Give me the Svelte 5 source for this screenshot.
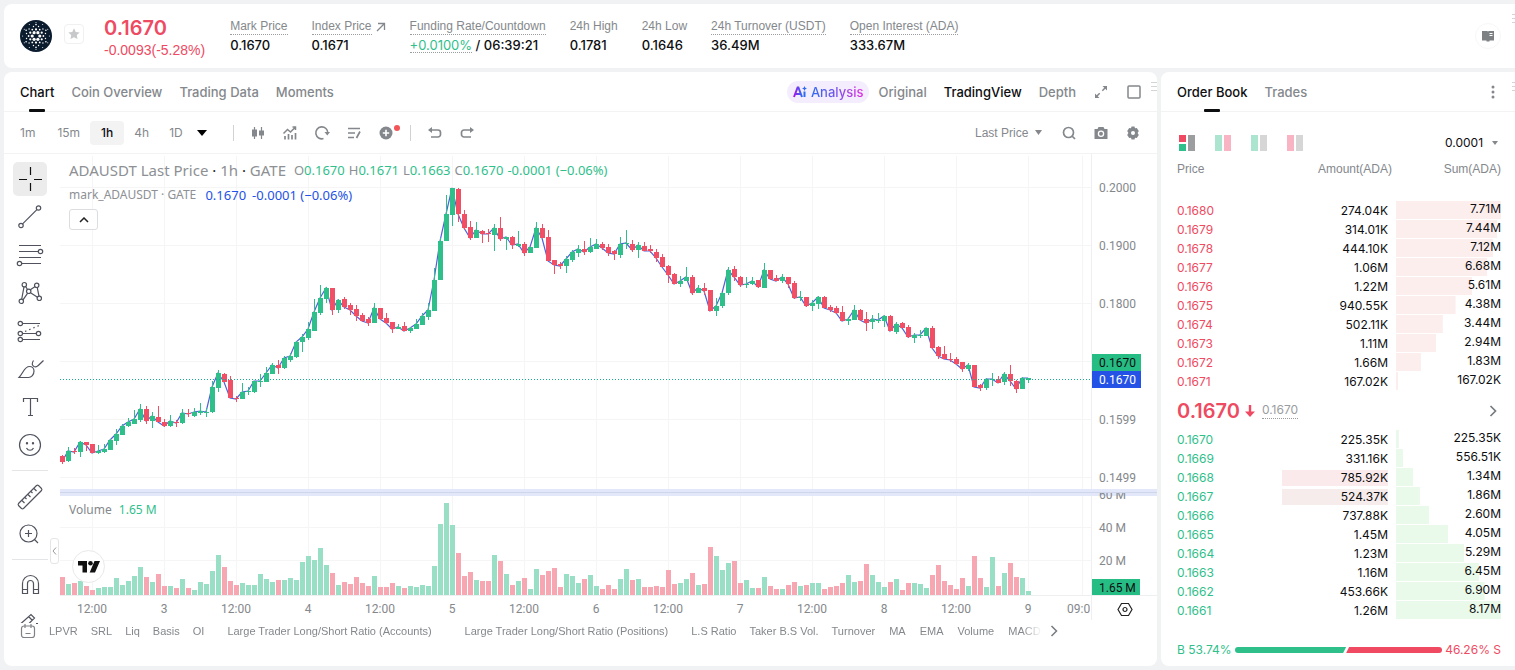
<script>
  const UP = '#2fbf8b';
  const DOWN = '#f04f66';

  // direction, high, body top, body bottom, low, volume height
  const raw = `D455,456,462,464,18 U447,451,461,462,11 D448,451,452,454,12 U441,442,452,457,14 D442,442,445,451,9 D444,444,453,453,5 U445,451,453,454,7 U444,449,452,453,8 U439,440,450,450,8 U429,434,441,445,17 U424,426,435,435,10 U418,422,426,427,14 U410,419,424,424,19 U404,409,420,422,28 D406,409,421,424,18 U412,416,421,428,13 D406,417,422,422,21 D419,422,426,427,9 U415,421,426,427,9 D420,422,423,427,7 U409,413,423,424,16 D409,413,414,417,7 U408,412,416,417,5 U403,411,413,415,13 U408,412,413,417,11 U381,387,412,413,24 U370,373,388,392,40 D373,374,382,382,28 D376,380,398,398,14 D396,398,399,402,10
U383,392,399,399,12 U387,391,392,395,10 U381,381,392,393,10 U374,381,382,387,21 U367,373,382,382,16 U363,365,374,374,13 D360,365,368,374,15 U356,358,368,369,15 U353,356,360,362,17 U341,342,357,358,15 U334,337,342,352,33 U322,329,338,340,39 U299,312,331,331,35 U285,298,313,315,47 U287,288,299,303,30 D288,288,310,315,22 U299,300,310,313,10 D297,299,307,309,13 D303,305,310,315,11 D305,309,316,321,18 D313,315,321,322,12 D317,319,323,326,9 U303,308,323,323,19 D308,308,319,320,8 D313,318,323,324,8 D322,322,329,333,12 U324,327,329,329,9 D322,326,331,331,7 U327,328,331,333,9 U319,324,329,329,8
U313,316,325,325,10 U303,310,317,320,9 U268,280,311,311,29 U238,241,280,280,71 U195,214,241,241,92 U188,188,215,226,70 D188,189,214,222,42 D210,214,228,230,19 D221,227,238,240,23 U222,230,238,238,15 D230,231,234,243,14 D229,233,234,242,14 U224,228,235,251,40 D217,228,239,241,34 U237,237,239,250,21 D236,237,245,249,10 U231,244,246,247,14 D242,244,253,256,17 U247,247,253,253,6 U222,228,248,248,26 D224,228,238,238,20 D230,237,261,261,24 D260,260,265,274,27 D262,264,266,269,8 U256,259,266,273,21 U250,252,260,262,19 U245,249,253,257,12 D241,249,252,255,16 U238,247,252,253,20 U239,244,249,249,9
D242,244,248,250,6 D244,247,253,256,10 D250,251,254,260,6 U237,244,255,258,16 U230,243,244,249,26 D240,244,250,252,15 U242,245,250,258,16 D242,246,251,251,8 D245,249,251,253,8 D249,252,258,262,9 D254,257,267,267,8 D265,266,275,283,25 D273,274,284,284,11 U276,281,284,287,12 U267,277,281,281,16 D275,277,293,295,22 U285,288,293,293,10 D283,288,291,295,11 D290,290,311,311,48 U298,306,311,316,39 U292,293,306,308,25 U267,270,293,295,32 D266,269,277,281,34 D276,277,285,287,12 U277,284,285,288,15 U277,281,284,285,7 D280,280,287,288,7 U263,270,288,288,18 D270,270,279,280,9 D275,278,281,281,6 U274,277,281,283,6
D277,277,284,288,10 D281,283,298,299,13 U291,297,298,301,9 D297,297,306,307,10 U300,303,306,311,12 U296,297,304,309,12 D296,297,308,308,6 D305,307,310,312,8 D306,308,313,314,9 D306,312,321,321,12 U317,319,321,325,20 U305,310,320,320,13 D309,310,320,321,14 D312,319,323,331,31 U315,319,322,329,20 U313,320,321,323,13 U315,316,321,327,8 D315,316,331,331,13 U322,324,332,334,16 D322,323,328,328,5 D325,327,337,338,12 U333,335,338,343,12 U330,335,336,338,11 U328,328,336,336,7 D326,328,348,349,20 D346,347,356,359,30 D346,354,359,359,14 D353,359,360,362,10 D357,359,364,365,6 D362,362,369,372,17 U363,365,369,371,9
D365,365,387,387,39 D384,385,388,391,17 U378,379,388,390,8 U373,379,380,386,38 D376,379,383,383,9 U372,374,382,385,22 D365,374,381,386,32 D380,381,389,393,18 U377,378,389,389,17 U378,378,380,383,4`;

  const TOP = 154;
  const PLOT = 1031;
  const AXIS = 66;
  const candles = raw.split(/\s+/).map((s, i) => {
    const [high, top, bottom, low, volume] = s.slice(1).split(',').map(Number);
    const up = s[0] === 'U';
    return { x: i * 6, up, high: high - TOP, top: top - TOP, h: Math.max(1, bottom - top), low: low - TOP, close: (up ? top : bottom) - TOP, volume };
  });
  const markLine = candles.map((c) => `${c.x + 2},${c.close}`).join(' ');

  let width = $state(PLOT + AXIS);
  // newest candle stays at the right edge
  const shift = $derived(width - PLOT - AXIS);

  const times = ['12:00', '3', '12:00', '4', '12:00', '5', '12:00', '6', '12:00', '7', '12:00', '8', '12:00', '9'];
  const priceTicks = [[34, '0.2000'], [92, '0.1900'], [150, '0.1800'], [266, '0.1599'], [324, '0.1499']];
  const gridRows = [34, 92, 150, 208, 266, 324, 374, 407];

  const stats = [
    ['24h High', '0.1781', false],
    ['24h Low', '0.1646', false],
    ['24h Turnover (USDT)', '36.49M', true],
    ['Open Interest (ADA)', '333.67M', true]
  ];
  const indicators = ['LPVR', 'SRL', 'Liq', 'Basis', 'OI', 'Large Trader Long/Short Ratio (Accounts)', 'Large Trader Long/Short Ratio (Positions)', 'L.S Ratio', 'Taker B.S Vol.', 'Turnover', 'MA', 'EMA', 'Volume', 'MACD'];

  const asks = [
    ['0.1680', '274.04K', '7.71M', 7.71], ['0.1679', '314.01K', '7.44M', 7.44], ['0.1678', '444.10K', '7.12M', 7.12],
    ['0.1677', '1.06M', '6.68M', 6.68], ['0.1676', '1.22M', '5.61M', 5.61], ['0.1675', '940.55K', '4.38M', 4.38],
    ['0.1674', '502.11K', '3.44M', 3.44], ['0.1673', '1.11M', '2.94M', 2.94], ['0.1672', '1.66M', '1.83M', 1.83],
    ['0.1671', '167.02K', '167.02K', 0.167]
  ];
  const bids = [
    ['0.1670', '225.35K', '225.35K', 0.225], ['0.1669', '331.16K', '556.51K', 0.557], ['0.1668', '785.92K', '1.34M', 1.34, 'flash'],
    ['0.1667', '524.37K', '1.86M', 1.86, 'flash late'], ['0.1666', '737.88K', '2.60M', 2.6], ['0.1665', '1.45M', '4.05M', 4.05],
    ['0.1664', '1.23M', '5.29M', 5.29], ['0.1663', '1.16M', '6.45M', 6.45], ['0.1662', '453.66K', '6.90M', 6.9],
    ['0.1661', '1.26M', '8.17M', 8.17]
  ];

  const ring = (n, r, size, turn = 0) =>
    Array.from({ length: n }, (_, i) => {
      const a = ((i + turn) / n) * Math.PI * 2;
      return { x: 16 + r * Math.cos(a), y: 16 + r * Math.sin(a), size };
    });
  const logoDots = [...ring(6, 3.8, 1.6), ...ring(6, 6.6, 1.1, 0.5), ...ring(6, 7.4, 0.9), ...ring(12, 9.8, 0.7, 0.5), ...ring(6, 11.4, 0.8, 0.5), ...ring(6, 13.4, 0.5), ...ring(6, 13.6, 0.5, 0.5)];
</script>

<main>
  <header class="card summary">
    <svg class="coin" viewBox="0 0 32 32" aria-hidden="true">
      <circle cx="16" cy="16" r="16" fill="#0b1b2e" />
      {#each logoDots as d}<circle cx={d.x} cy={d.y} r={d.size} fill="#fff" />{/each}
    </svg>
    <button class="star" aria-label="Add to favourites">
      <svg width="12" height="12" viewBox="0 0 12 12"><path d="M6 .3l1.7 3.6 4 .5-2.9 2.7.7 4L6 9.2l-3.5 1.9.7-4L.3 4.4l4-.5z" fill="#c6c8ca" /></svg>
    </button>
    <div class="last">
      <strong>0.1670</strong>
      <span>-0.0093(-5.28%)</span>
    </div>
    <dl>
      <div><dt><span class="dotted">Mark Price</span></dt><dd>0.1670</dd></div>
      <div>
        <dt><a href="#index"><span class="dotted">Index Price</span><svg width="10" height="10" viewBox="0 0 10 10"><path d="M1 9L8.500 1.500M2 1.500h6.500V8" fill="none" stroke="#84888c" stroke-width="1.300" /></svg></a></dt>
        <dd>0.1671</dd>
      </div>
      <div><dt><span class="dotted">Funding Rate/Countdown</span></dt><dd><span class="rate">+0.0100%</span> / 06:39:21</dd></div>
      {#each stats as [label, value, tip]}
        <div><dt><span class:dotted={tip}>{label}</span></dt><dd>{value}</dd></div>
      {/each}
    </dl>
    <button class="guide" aria-label="Guide">
      <svg width="14" height="14" viewBox="0 0 14 14"><path d="M1 2h5.500v9.500H1zM7.500 2H13v9.500H7.500zM5.500 11h3v1.500h-3zM6 2.500h2v9H6z" fill="#7e8184" /><path d="M8.500 4.500h3M8.500 6.500h3" stroke="#fff" /></svg>
    </button>
    <span class="grip" aria-hidden="true"></span>
  </header>

  <section class="card chart">
    <nav class="tabs">
      <button class="active">Chart</button>
      <button>Coin Overview</button>
      <button>Trading Data</button>
      <button>Moments</button>
      <span class="spacer"></span>
      <button class="ai">
        <svg width="14" height="12" viewBox="0 0 14 12"><defs><linearGradient id="ai"><stop stop-color="#a615e8" /><stop offset="1" stop-color="#2d6bf0" /></linearGradient></defs><path d="M1 11L4.600 1.500h.8L9 11M2.500 8h5" fill="none" stroke="url(#ai)" stroke-width="2" /><path d="M11.500 5.500V11" stroke="#2d6bf0" stroke-width="2" /><path d="M11.500 0l.8 1.700 1.700.8-1.700.8-.8 1.700-.8-1.700L9 2.500l1.700-.8z" fill="#2d6bf0" /></svg><span>Analysis</span>
      </button>
      <button>Original</button>
      <button class="chosen">TradingView</button>
      <button>Depth</button>
      <button class="icon" aria-label="Expand"><svg viewBox="0 0 16 16"><path d="M9.300 6.700L13 3M6.700 9.300L3 13" fill="none" stroke="currentColor" stroke-width="1.500" /><path d="M9.500 2H14v4.500zM2 9.500V14h4.500z" fill="currentColor" /></svg></button>
      <button class="icon" aria-label="Full screen"><svg viewBox="0 0 16 16"><rect x="2" y="2" width="12" height="12" rx="1" fill="none" stroke="currentColor" stroke-width="1.500" /></svg></button>
      <span class="grip" aria-hidden="true"></span>
    </nav>

    <div class="toolbar">
      <button>1m</button>
      <button>15m</button>
      <button class="on">1h</button>
      <button>4h</button>
      <button>1D</button>
      <button class="more" aria-label="More intervals"><svg width="10" height="6" viewBox="0 0 10 6"><path d="M0 0h10L5 6z" fill="#000" /></svg></button>
      <i class="bar"></i>
      <button class="icon" aria-label="Chart type"><svg viewBox="0 0 16 16"><path d="M4.500 2v12M11.500 2v12" stroke="currentColor" stroke-width="1.200" /><path d="M2 4.500h5v7H2zM9 5.500h5v5H9z" fill="currentColor" /></svg></button>
      <button class="icon" aria-label="Indicators"><svg viewBox="0 0 16 16"><path d="M1.500 8.500l4-4 3 2.500 5-5M10.500 2h3v3" fill="none" stroke="currentColor" stroke-width="1.500" /><path d="M3 11v3.500M6.500 9v5.500M10 10v4.500M13.500 8v6.500" stroke="currentColor" stroke-width="1.700" /></svg></button>
      <button class="icon" aria-label="Replay"><svg viewBox="0 0 16 16"><path d="M9.500 13.600A6 6 0 1 1 13.800 8" fill="none" stroke="currentColor" stroke-width="1.600" /><path d="M10.500 7h5.500l-2.700 3.500z" fill="currentColor" /></svg></button>
      <button class="icon" aria-label="Templates"><svg viewBox="0 0 16 16"><path d="M2 3.500h12M2 8h7M2 12.500h6M14 6.500l-3.500 6.500" fill="none" stroke="currentColor" stroke-width="1.700" /></svg></button>
      <button class="icon alert" aria-label="Add alert"><svg viewBox="0 0 16 16"><circle cx="8" cy="8" r="6.500" fill="currentColor" /><path d="M8 4.800v6.400M4.800 8h6.400" stroke="#fff" stroke-width="1.600" /></svg></button>
      <i class="bar tight"></i>
      <button class="icon" aria-label="Undo"><svg viewBox="0 0 16 16"><path d="M3 5h8a2.500 2.500 0 0 1 2.500 2.500v2A2.500 2.500 0 0 1 11 12H4" fill="none" stroke="currentColor" stroke-width="1.700" /><path d="M5 2v6L1 5z" fill="currentColor" /></svg></button>
      <button class="icon" aria-label="Redo"><svg viewBox="0 0 16 16"><path d="M13 5H5a2.500 2.500 0 0 0-2.500 2.500v2A2.500 2.500 0 0 0 5 12h7" fill="none" stroke="currentColor" stroke-width="1.700" /><path d="M11 2v6l4-3z" fill="currentColor" /></svg></button>
      <span class="spacer"></span>
      <label class="pick"><select aria-label="Price source"><option>Last Price</option></select><svg width="7" height="5" viewBox="0 0 7 5"><path d="M0 0h7L3.500 5z" fill="#84888c" /></svg></label>
      <button class="icon" aria-label="Search"><svg viewBox="0 0 16 16"><circle cx="7.500" cy="7.500" r="5" fill="none" stroke="currentColor" stroke-width="1.700" /><path d="M11 11l3 3" stroke="currentColor" stroke-width="1.700" /></svg></button>
      <button class="icon" aria-label="Screenshot"><svg viewBox="0 0 16 16"><path d="M1.500 4h3l1-2h5l1 2h3v10h-13z" fill="currentColor" /><circle cx="8" cy="8.700" r="2.600" fill="none" stroke="#fff" stroke-width="1.300" /></svg></button>
      <button class="icon" aria-label="Settings"><svg viewBox="0 0 16 16"><path d="M6.500 1.500h3l.5 1.800 1.800-.4 2 3.100-1.200 2 1.200 2-2 3.100-1.800-.4-.5 1.800h-3L6 12.700l-1.800.4-2-3.100 1.200-2-1.200-2 2-3.100 1.800.4z" fill="currentColor" /><circle cx="8" cy="8" r="2" fill="#fff" /></svg></button>
    </div>

    <div class="body">
      <div class="tools">
        <button class="on" aria-label="Cross"><svg viewBox="0 0 34 34"><path d="M17.500 5v8M17.500 21v8M6 17.500h8M21 17.500h8" stroke="#111" /></svg></button>
        <button aria-label="Trend line"><svg viewBox="0 0 34 34"><circle cx="8" cy="25.500" r="2.200" /><circle cx="25.500" cy="8" r="2.200" /><path d="M9.600 23.900L23.900 9.600" /></svg></button>
        <button aria-label="Fib retracement"><svg viewBox="0 0 34 34"><path d="M6 7.500h22M6 13.500h19.500M6 19.500h22M8.500 25.500H28" /><circle cx="27.500" cy="13.500" r="2.200" /><circle cx="6.500" cy="25.500" r="2.200" /></svg></button>
        <button aria-label="Patterns"><svg viewBox="0 0 34 34"><path d="M8.700 23.200L11 10.800M12.500 10.300l2 3.200M17.300 13.800l4.900-3.200M24.200 11.300L26 20.200M10 23.800l4.500-6.500M17.500 16.800l7 4.500" /><circle cx="11.300" cy="8.700" r="2.200" /><circle cx="23.700" cy="9.300" r="2.200" /><circle cx="15.700" cy="15.300" r="2.200" /><circle cx="8.300" cy="25.300" r="2.200" /><circle cx="26.300" cy="22.300" r="2.200" /></svg></button>
        <button aria-label="Forecast"><svg viewBox="0 0 34 34"><circle cx="7.300" cy="9.500" r="2.200" /><circle cx="7.300" cy="19.500" r="2.200" /><circle cx="25.500" cy="19.500" r="2.200" /><circle cx="7.300" cy="25.500" r="2.200" /><path d="M9.500 9.500H27M9.500 19.500h13.800M9.500 25.500H27" /><path d="M12 17.500l14-6" stroke-dasharray="1.500 3" /></svg></button>
        <button aria-label="Brush"><svg viewBox="0 0 34 34"><path d="M6 25.500h9.500c3 0 5.500-3 5.500-6.500 0-2.700-2-4.500-4.500-4.500-5 0-6 6-10.500 11z" /><path d="M20.500 8.500c-2 3-1.500 5 .5 6 1.500.7 3 .3 4-.8l5.500-5.200" /></svg></button>
        <button aria-label="Text"><svg viewBox="0 0 34 34"><path d="M10.500 12V8.500h14V12M17.500 8.500v17M15 25.500h5" /></svg></button>
        <button aria-label="Icons"><svg viewBox="0 0 34 34"><circle cx="17" cy="17" r="10.500" /><path d="M13.500 20c1.500 3 5.500 3 7 0" /><circle cx="14" cy="15.300" r=".6" /><circle cx="20" cy="15.300" r=".6" /></svg></button>
        <hr />
        <button aria-label="Measure"><svg viewBox="0 0 34 34"><path d="M5.500 24.500l18-18q1-.7 2 0l3 3q.8 1 0 2l-18 18q-1 .7-2 0l-3-3q-.7-1 0-2zM9 21.500l2.500 2.500M12 18.500l1.500 1.500M15 15.500l2.500 2.500M18 12.500l1.500 1.500M21 9.500l2.500 2.500" /></svg></button>
        <button aria-label="Zoom in"><svg viewBox="0 0 34 34"><circle cx="15.500" cy="16.500" r="8.500" /><path d="M21.500 22.500l3.500 3.500M15.500 13v7M12 16.500h7" /></svg></button>
        <hr />
        <button aria-label="Magnet"><svg viewBox="0 0 34 34"><path d="M9.500 25.500v-10a7.500 7.500 0 0 1 16 0v10h-5v-10a3 3 0 0 0-6 0v10zM9.500 21.500h5M20.500 21.500h5" /></svg></button>
        <button aria-label="Keep drawing"><svg viewBox="0 0 34 34"><path d="M8 17.500l10-9 3.500 3.500-8 8M15.500 10.500l3.500 3.500M22 17.500h3" /></svg></button>
      </div>

      <div class="plot" bind:clientWidth={width}>
        <svg width={width} height="466" class="canvas" role="img" aria-label="ADAUSDT price and volume">
          <g stroke="#f5f5f6">
            {#each times as _, i}<path d="M{shift + 32.5 + i * 72} 2V441" />{/each}
            <path d="M{shift + 1022.5} 2V441" />
            {#each gridRows as y}<path d="M0 {y - 0.5}H{shift + PLOT}" />{/each}
          </g>
          <path d="M{shift + 1031.500} 0V466M0 441.500H{width}" stroke="#eeeff0" />
          <g transform="translate({shift} 0)">
            {#each candles as c}<rect x={c.x} y={441 - c.volume} width="5" height={c.volume} fill={c.up ? '#98dfc5' : '#f7a7b2'} />{/each}
            <polyline points={markLine} fill="none" stroke="#5061d8" stroke-width="1.200" />
            {#each candles as c}
              <g fill={c.up ? UP : DOWN}>
                <rect x={c.x + 2} y={c.high} width="1" height={c.low - c.high} />
                <rect x={c.x} y={c.top} width="5" height={c.h} />
              </g>
            {/each}
          </g>
          <path d="M0 225.500H{shift + PLOT}" stroke="#16ac92" stroke-dasharray="1 2" />
          <rect y="335" width={width} height="7" fill="#e2e8fa" />
          <path d="M0 338.500H{width}" stroke="#cfd6ec" />
          <g class="ticks" transform="translate({shift} 0)">
            {#each times as t, i}<text x={32 + i * 72} y="459" text-anchor="middle">{t}</text>{/each}
            <svg x="1000" y="440" width="30" height="24"><text x="7" y="19">09:00</text></svg>
            {#each priceTicks as [y, t]}<text x="1039" y={y + 4}>{t}</text>{/each}
            <svg x="1032" y="339" width="65" height="12"><text x="7" y="6">60 M</text></svg>
            <text x="1039" y="378">40 M</text>
            <text x="1039" y="411">20 M</text>
          </g>
          <g class="tags" transform="translate({shift + 1032} 0)">
            <rect y="200" width="49" height="17" fill="#26bd84" /><text x="7" y="213">0.1670</text>
            <rect y="217" width="49" height="17" fill="#2452e6" /><text x="7" y="230" fill="#fff">0.1670</text>
            <rect y="425" width="48" height="16" fill="#26bd84" /><text x="7" y="438">1.65 M</text>
          </g>
          <g transform="translate({shift + 1065} 455.500)" fill="none" stroke="#222" stroke-width="1.200"><path d="M-7 0l3.500-6h7L7 0 3.500 6h-7z" /><circle r="2" /></g>
        </svg>

        <div class="legend">
          <p class="title">ADAUSDT Last Price <b>·</b> 1h <b>·</b> GATE
            <span class="ohlc"><span>O<em>0.1670</em></span><span>H<em>0.1671</em></span><span>L<em>0.1663</em></span><span>C<em>0.1670</em></span><em>-0.0001 (−0.06%)</em></span>
          </p>
          <p class="mark">mark_ADAUSDT · GATE <span>0.1670</span><span>-0.0001 (−0.06%)</span></p>
          <button aria-label="Collapse legend"><svg width="10" height="6" viewBox="0 0 10 6"><path d="M1 5l4-4 4 4" fill="none" stroke="#222" stroke-width="1.500" /></svg></button>
        </div>
        <p class="volume">Volume <span>1.65 M</span></p>
        <a class="tv" href="#tradingview" aria-label="TradingView"><svg width="22" height="12" viewBox="0 0 22 12"><path d="M0 0h9v11.500H4.500V4.500H0zM16.500 0H22l-5 11.500h-5.300z" fill="#111" /><circle cx="12.500" cy="2.300" r="2.300" fill="#111" /></svg></a>
        <button class="fold" aria-label="Hide tools"><svg width="5" height="8" viewBox="0 0 5 8"><path d="M4 .5L1 4l3 3.500" fill="none" stroke="#999" /></svg></button>
      </div>
    </div>

    <footer>
      <button class="range" aria-label="Date range"><svg width="16" height="16" viewBox="0 0 16 16"><rect x="1.500" y="3" width="13" height="11.500" rx="2.500" fill="#fff" stroke="#7f8286" stroke-width="1.200" /><path d="M5 1v4M11 1v4M5.500 10.500h5" stroke="#7f8286" stroke-width="1.200" /></svg></button>
      <div class="indicators">
        {#each indicators as name}<button class:wide={name.length > 30}>{name}</button>{/each}
      </div>
      <button class="next" aria-label="More indicators"><svg width="8" height="12" viewBox="0 0 8 12"><path d="M1.500 1l5 5-5 5" fill="none" stroke="#777b7f" stroke-width="1.500" /></svg></button>
    </footer>
  </section>

  <section class="card book">
    <nav class="tabs">
      <button class="active">Order Book</button>
      <button>Trades</button>
      <span class="spacer"></span>
      <button class="dots" aria-label="More"><svg width="4" height="14" viewBox="0 0 4 14"><g fill="#84888c"><circle cx="2" cy="2" r="1.500" /><circle cx="2" cy="7" r="1.500" /><circle cx="2" cy="12" r="1.500" /></g></svg></button>
      <span class="grip" aria-hidden="true"></span>
    </nav>
    <div class="modes">
      <button aria-label="Default view"><svg width="16" height="16" viewBox="0 0 16 16"><path d="M0 0h7v7H0z" fill="#f04a63" /><path d="M0 9h7v7H0z" fill="#2fbf8b" /><path d="M9 0h7v16H9z" fill="#9c9d9e" /></svg></button>
      <button aria-label="Side by side"><svg width="16" height="16" viewBox="0 0 16 16"><path d="M0 0h7v16H0z" fill="#abe5d0" /><path d="M9 0h7v16H9z" fill="#f9b4c3" /></svg></button>
      <button aria-label="Bids only"><svg width="16" height="16" viewBox="0 0 16 16"><path d="M0 0h7v16H0z" fill="#abe5d0" /><path d="M9 0h7v16H9z" fill="#d6d6d6" /></svg></button>
      <button aria-label="Asks only"><svg width="16" height="16" viewBox="0 0 16 16"><path d="M0 0h7v16H0z" fill="#f9b4c3" /><path d="M9 0h7v16H9z" fill="#d6d6d6" /></svg></button>
      <span class="spacer"></span>
      <label class="pick"><select aria-label="Price step"><option>0.0001</option></select><svg width="6" height="4" viewBox="0 0 6 4"><path d="M0 0h6L3 4z" fill="#84888c" /></svg></label>
    </div>
    <table>
      <thead><tr><th>Price</th><th>Amount(ADA)</th><th>Sum(ADA)</th></tr></thead>
      <tbody class="asks">
        {#each asks as [price, amount, sum, total]}
          <tr><td>{price}</td><td><span>{amount}</span></td><td style="--fill: {(total / 7.71) * 100}%">{sum}</td></tr>
        {/each}
      </tbody>
      <tbody>
        <tr><td colspan="3">
          <div class="mid"><strong>0.1670</strong><svg width="10" height="12" viewBox="0 0 10 12"><path d="M3.800 0h2.400v6.500H10L5 12 0 6.500h3.800z" fill="#f04a63" /></svg><span>0.1670</span><svg class="go" width="8" height="12" viewBox="0 0 8 12"><path d="M1.500 1l5 5-5 5" fill="none" stroke="#777b7f" stroke-width="1.700" /></svg></div>
        </td></tr>
      </tbody>
      <tbody class="bids">
        {#each bids as [price, amount, sum, total, state]}
          <tr><td>{price}</td><td><span class={state}>{amount}</span></td><td style="--fill: {(total / 8.17) * 100}%">{sum}</td></tr>
        {/each}
      </tbody>
    </table>
    <div class="ratio">
      <span class="up">B 53.74%</span>
      <div class="track"><i style="flex-grow: 53.74"></i><i style="flex-grow: 46.26"></i></div>
      <span class="down">46.26% S</span>
    </div>
  </section>
</main>

<style>
  :global(body) { margin: 0; background: #f1f2f3; }
  * { box-sizing: border-box; }
  main { display: grid; grid-template: auto 1fr / minmax(0, 1fr) 354px; gap: 4px; padding: 4px 0 4px 4px; min-height: 100vh; font-family: "Liberation Sans", Arial, sans-serif; font-size: 12px; line-height: 16px; color: #84888c; }
  button { border: 0; padding: 0; background: none; color: inherit; font: inherit; cursor: pointer; white-space: nowrap; }
  svg { display: block; flex: none; }
  p, dl, dd { margin: 0; }
  .card { background: #fff; border-radius: 8px; min-width: 0; position: relative; }
  .spacer { flex: 1; }
  .grip { position: absolute; right: 0; top: 10px; width: 6px; height: 10px; background: repeating-linear-gradient(#d3d5d7 0 1px, transparent 1px 4px); }

  .summary { grid-column: 1 / -1; display: flex; align-items: center; height: 64px; padding: 0 14px 0 16px; border-radius: 8px 0 0 8px; }
  .summary .grip, .book .grip { width: 3px; }
  .coin { width: 32px; height: 32px; }
  .star { display: grid; place-items: center; width: 20px; height: 20px; margin: 0 20px 4px 12px; border: 1px solid #f0f0f1; border-radius: 4px; }
  .last { display: flex; flex-direction: column; color: #ee4a62; font-size: 14px; line-height: 20px; margin-right: 25px; padding-top: 3px; }
  .last strong { font: 600 20px/24px Inter, sans-serif; }
  dl { display: flex; gap: 24px; flex: 1; }
  dt { height: 18px; }
  dd { font: 500 13px/18px Inter, sans-serif; color: #0d0e10; }
  dt a { display: flex; gap: 4px; color: inherit; text-decoration: none; align-items: center; }
  .dotted { display: inline-block; border-bottom: 1px dotted #9a9da0; height: 17px; }
  .rate { display: inline-block; color: #2fbf8b; border-bottom: 1px dotted #9a9da0; font-weight: 400; height: 17px; line-height: 18px; }
  .guide { display: grid; place-items: center; width: 26px; height: 26px; border: 1px solid #f7f7f8; border-radius: 50%; }

  .tabs { display: flex; align-items: center; gap: 17px; height: 40px; padding: 0 15px 0 16px; border-bottom: 1px solid #f3f3f4; font: 500 13px/16px Inter, sans-serif; }
  .active, .chosen { color: #0d0e10; }
  .active { position: relative; }
  .active::after { content: ""; position: absolute; left: 50%; top: 25px; width: 16px; height: 3px; margin-left: -8px; border-radius: 1px; background: #0d0e10; }
  .ai { display: flex; align-items: center; gap: 4px; height: 22px; padding: 0 6px; margin-right: -8px; border-radius: 11px; background: #f4edfd; }
  .ai span { background: linear-gradient(90deg, #2d6bf0, #7a52ea 50%, #e02be0); background-clip: text; color: transparent; }
  .icon { width: 16px; height: 16px; color: #84888c; }
  .icon svg { width: 16px; height: 16px; }
  .chart { display: flex; flex-direction: column; }

  .toolbar { display: flex; align-items: center; gap: 16px; height: 42px; padding: 0 16px; border-bottom: 1px solid #f3f3f4; font: 400 12px/16px Inter, sans-serif; }
  .toolbar > button:first-child { margin-right: 6px; }
  .toolbar .on { height: 24px; padding: 0 11px; margin: 0 -6px; border-radius: 4px; background: #f3f3f4; color: #0d0e10; font-weight: 500; }
  .toolbar button:nth-child(5) { margin-left: 4px; }
  .toolbar .more { margin-left: -2px; }
  .bar { width: 1px; height: 16px; margin: 0 0 0 10px; background: #d0d2d4; }
  .bar.tight { margin: 0; }
  .alert { position: relative; }
  .alert::after { content: ""; position: absolute; right: -6px; top: 0; width: 6px; height: 6px; border-radius: 50%; background: #f25556; }
  .pick { display: flex; align-items: center; gap: 6px; }
  .toolbar .pick { margin-right: 3px; }
  select { appearance: none; border: 0; padding: 0; margin: 0; background: none; font: 12px/16px "Liberation Sans", Arial, sans-serif; color: inherit; }

  .body { display: grid; grid-template-columns: 56px minmax(0, 1fr); }
  .tools { display: flex; flex-direction: column; align-items: center; gap: 4px; height: 470px; padding: 8px 8px 0; overflow: hidden; margin-bottom: -4px; }
  .tools button { flex: none; width: 34px; height: 34px; border-radius: 5px; margin-left: -5px; }
  .tools .on { background: #ececed; }
  .tools svg { width: 34px; height: 34px; fill: none; stroke: #50535e; stroke-width: 1.200; }
  .tools hr { width: 36px; height: 1px; margin: 4px 0 4px -4px; border: 0; background: #e4e5e7; flex: none; }
  .plot { position: relative; height: 466px; }
  .canvas { position: absolute; inset: 0; }
  .ticks text, .tags text { font: 12px Roboto, sans-serif; }
  .ticks { fill: #84888c; }
  .tags text { fill: #0d0e10; }
  .tags text[fill] { fill: #fff; }
  .legend { position: absolute; left: 9px; top: 5px; font-family: "Noto Sans", sans-serif; color: #8d9094; }
  .legend p { display: flex; white-space: pre; }
  .legend .title { font-size: 15px; line-height: 22px; align-items: center; }
  .legend b { color: #222; font-weight: 400; }
  .ohlc { display: flex; gap: 4px; margin-left: 4px; font-size: 13px; }
  em { font-style: normal; color: #2fbf8b; }
  .legend .mark { gap: 6px; font-size: 12px; line-height: 28px; }
  .mark span { color: #2452e6; font-size: 13px; }
  .legend button { display: grid; place-items: center; width: 29px; height: 21px; border: 1px solid #dcdde0; border-radius: 3px; background: #fff; }
  .volume { position: absolute; left: 9px; top: 346px; font: 12px/20px "Noto Sans", sans-serif; }
  .volume span { color: #2fbf8b; margin-left: 4px; }
  .tv { position: absolute; left: 12px; top: 396px; display: grid; place-items: center; width: 33px; height: 33px; border: 1px solid #e9e9ea; border-radius: 50%; background: #fff; }
  .fold { position: absolute; left: -10px; top: 384px; display: grid; place-items: center; width: 9px; height: 26px; border: 1px solid #e4e5e7; border-radius: 3px; }

  footer { display: flex; align-items: center; height: 22px; padding: 0 16px; font-size: 11px; position: relative; }
  .range { margin-right: 13px; margin-top: -1px; background: #fff; }
  .indicators { display: flex; gap: 13px; flex: 0 1 993px; overflow: hidden; mask-image: linear-gradient(90deg, #000 calc(100% - 20px), transparent); }
  .indicators .wide { padding: 0 10px; }
  .indicators button:nth-last-child(-n + 4) { margin-left: 1px; }
  .next { margin-left: 8px; }

  .book { display: flex; flex-direction: column; border-radius: 8px 0 0 8px; padding-bottom: 8px; }
  .modes { display: flex; align-items: center; gap: 20px; height: 16px; margin: 23px 17px 0 18px; }
  .modes select { font-family: Inter, sans-serif; color: #0d0e10; }
  .modes .pick { gap: 8px; }
  .book .tabs { padding-right: 20px; }
  table { margin: 10px 14px 0 16px; border-collapse: collapse; table-layout: fixed; font: 400 12px/16px Inter, sans-serif; color: #0d0e10; }
  th { height: 40px; padding: 0; vertical-align: top; text-align: right; font: 400 12px/16px "Liberation Sans", Arial, sans-serif; color: #84888c; }
  th:first-child { text-align: left; }
  th:nth-child(2) { width: 114px; padding-right: 4px; }
  th:nth-child(3) { width: 105px; }
  td { height: 19px; padding: 0; text-align: right; }
  td:first-child { text-align: left; }
  td:nth-child(2) { padding-right: 8px; }
  td:nth-child(2) span { display: block; }
  td:nth-child(3) { background: linear-gradient(var(--tint), var(--tint)) 0 0 / var(--fill) 18px no-repeat; line-height: 15px; vertical-align: top; }
  .asks { --tint: #fdeeee; }
  .bids { --tint: #e9f9ea; }
  .asks td:first-child { color: #ee4a62; }
  .bids td:first-child { color: #2fbf8b; }
  .flash { background: #fbeaeb; }
  .flash.late { background: #f7ecec; }
  .mid { display: flex; align-items: center; height: 39px; color: #999c9f; }
  .mid strong { font: 600 20px/24px Inter, sans-serif; color: #ee4a62; margin-right: 5px; }
  .mid span { margin-left: 7px; height: 17px; border-bottom: 1px dotted #9a9da0; }
  .mid .go { margin-left: auto; margin-right: 4px; }
  .ratio { display: flex; align-items: center; gap: 3px; margin: auto 14px 0 16px; font: 400 12px/16px Inter, sans-serif; }
  .up { color: #2fbf8b; }
  .down { color: #ee4a62; }
  .track { display: flex; flex: 1; height: 6px; border-radius: 3px; overflow: hidden; }
  .track i { background: #2fbf8b; clip-path: polygon(0 0, 100% 0, calc(100% - 3px) 100%, 0 100%); flex-basis: 0; }
  .track i + i { background: #f04a63; clip-path: polygon(3px 0, 100% 0, 100% 100%, 0 100%); }
</style>
